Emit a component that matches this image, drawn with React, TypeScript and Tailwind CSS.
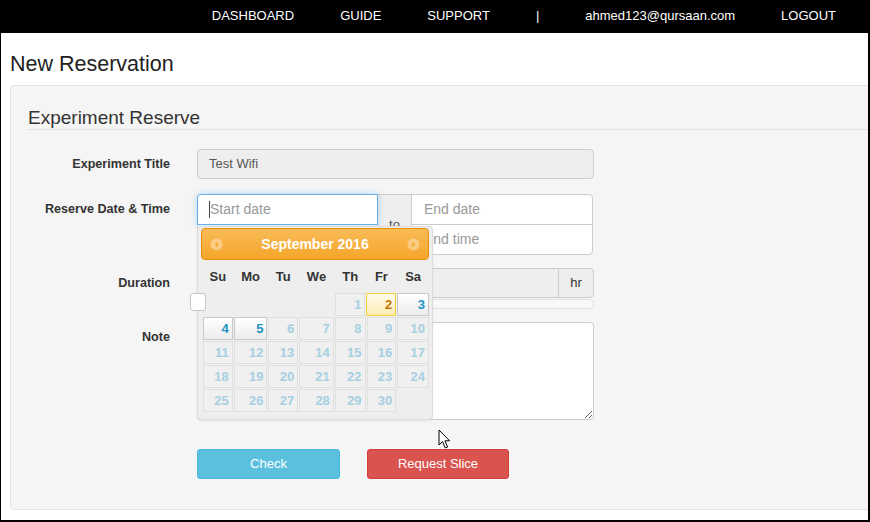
import React from 'react';

type Cell = { day?: number; state?: 'off' | 'on' | 'hover' };

const colWidths = ['w-[30px]', 'w-[34px]', 'w-[30px]', 'w-[35px]', 'w-[31px]', 'w-[30px]', 'w-[32px]'];
const dayNames = ['Su', 'Mo', 'Tu', 'We', 'Th', 'Fr', 'Sa'];

// September 2016, first week starts on Thursday
const weeks: Cell[][] = [
  [{}, {}, {}, {}, { day: 1, state: 'off' }, { day: 2, state: 'hover' }, { day: 3, state: 'on' }],
  [{ day: 4, state: 'on' }, { day: 5, state: 'on' }, 6, 7, 8, 9, 10].map((c) =>
    typeof c === 'number' ? { day: c, state: 'off' as const } : c
  ),
  [11, 12, 13, 14, 15, 16, 17].map((d) => ({ day: d, state: 'off' as const })),
  [18, 19, 20, 21, 22, 23, 24].map((d) => ({ day: d, state: 'off' as const })),
  [...[25, 26, 27, 28, 29, 30].map((d) => ({ day: d, state: 'off' as const })), {}],
];

function DayCell({ cell, width }: { cell: Cell; width: string }) {
  if (!cell.day) return <div className={`${width} h-[23px]`} />;
  const tone =
    cell.state === 'hover'
      ? 'border-[#f7cf3a] bg-gradient-to-b from-[#fffcec] to-[#fcecb0] text-[#c77405]'
      : cell.state === 'on'
      ? 'border-[#c9c9c9] bg-gradient-to-b from-white to-[#ececec] text-[#1c94c4]'
      : 'border-[#e0e0e0] bg-[#f0f0f0] text-[#a6cfe1]';
  return (
    <div className={`${width} h-[23px] border ${tone} flex items-center justify-end pr-[3px] text-[13px] font-bold`}>
      {cell.day}
    </div>
  );
}

function ArrowIcon({ dir }: { dir: 'prev' | 'next' }) {
  return (
    <svg width="13" height="13" viewBox="0 0 13 13">
      <circle cx="6.5" cy="6.5" r="6" fill="#fff" fillOpacity="0.35" />
      {dir === 'prev' ? (
        <path d="M7.8 3.8 L4.8 6.5 L7.8 9.2 Z" fill="#f6a828" />
      ) : (
        <path d="M5.2 3.8 L8.2 6.5 L5.2 9.2 Z" fill="#f6a828" />
      )}
    </svg>
  );
}

function Calendar() {
  return (
    <div className="absolute left-0 top-[32px] z-10 w-[236px] h-[194px] border border-[#dcdcdc] rounded-[4px] bg-[#eeeeee] px-[3px] pt-[1px] shadow-[0_1px_2px_rgba(0,0,0,0.08)]">
      <div className="w-[228px] h-[32px] border border-[#e78f08] rounded-[4px] bg-gradient-to-b from-[#f9bb55] to-[#f5a628] flex items-center justify-between px-[8px] text-white text-[14px] font-bold">
        <ArrowIcon dir="prev" />
        <span>September 2016</span>
        <ArrowIcon dir="next" />
      </div>
      <div className="ml-[2px] flex gap-[1px] h-[33px] items-center">
        {dayNames.map((d, i) => (
          <div key={d} className={`${colWidths[i]} text-center text-[13px] font-bold text-[#333]`}>
            {d}
          </div>
        ))}
      </div>
      <div className="ml-[2px] flex flex-col gap-[1px]">
        {weeks.map((w, wi) => (
          <div key={wi} className="flex gap-[1px]">
            {w.map((c, ci) => (
              <DayCell key={ci} cell={c} width={colWidths[ci]} />
            ))}
          </div>
        ))}
      </div>
    </div>
  );
}

function Label({ children }: { children: React.ReactNode }) {
  return (
    <div className="w-[142px] shrink-0 text-right font-bold text-[12.6px] leading-[30px] text-[#333]">{children}</div>
  );
}

export default function App() {
  return (
    <div className="relative w-[870px] h-[522px] overflow-hidden bg-white border-l border-r-2 border-b-2 border-black font-['Liberation_Sans',Arial,sans-serif]">
      <nav className="h-[33px] bg-black flex items-center justify-end gap-[46px] pr-[32px] pb-[2px] text-white text-[13px]">
        <span>DASHBOARD</span>
        <span>GUIDE</span>
        <span>SUPPORT</span>
        <span>|</span>
        <span>ahmed123@qursaan.com</span>
        <span>LOGOUT</span>
      </nav>

      <div className="pl-[9px]">
        <h1 className="mt-[20px] text-[21.5px] leading-[22px] text-[#222]">New Reservation</h1>

        <div className="mt-[10px] -mr-[30px] h-[425px] border border-[#e3e3e3] rounded-[4px] bg-[#f5f5f5] pl-[17px] pt-[21px]">
          <div className="text-[19px] leading-[21px] text-[#333] pb-[1px] border-b border-[#e3e3e3]">
            Experiment Reserve
          </div>

          {/* Experiment Title */}
          <div className="mt-[19px] flex">
            <Label>Experiment Title</Label>
            <div className="ml-[27px] w-[397px] h-[30px] border border-[#ccc] rounded-[4px] bg-[#eee] pl-[11px] flex items-center text-[13px] text-[#555]">
              Test Wifi
            </div>
          </div>

          {/* Reserve Date & Time */}
          <div className="mt-[15px] flex">
            <Label>Reserve Date &amp; Time</Label>
            <div className="relative ml-[27px] flex">
              <div className="w-[181px] flex flex-col">
                <div className="relative z-[1] h-[31px] border border-[#66afe9] rounded-tl-[4px] bg-white pl-[11px] flex items-center text-[14px] text-[#999] shadow-[0_0_6px_rgba(102,175,233,0.45)]">
                  <span className="w-px h-[17px] bg-[#444]" />
                  <span>Start date</span>
                </div>
                {/* start time field, hidden under the open calendar */}
                <div className="-mt-px h-[31px] border border-[#ccc] rounded-bl-[4px] bg-white" />
              </div>
              <div className="-ml-px w-[35px] h-[61px] border border-[#ccc] bg-[#eee] flex items-center justify-center text-[13px] text-[#555]">
                to
              </div>
              <div className="-ml-px w-[182px] flex flex-col">
                <div className="h-[31px] border border-[#ccc] rounded-tr-[4px] bg-white pl-[12px] flex items-center text-[14px] text-[#999]">
                  End date
                </div>
                <div className="-mt-px h-[31px] border border-[#ccc] rounded-br-[4px] bg-white pl-[12px] flex items-center text-[14px] text-[#999]">
                  End time
                </div>
              </div>
              <Calendar />
            </div>
          </div>

          {/* Duration */}
          <div className="mt-[13px] flex">
            <Label>Duration</Label>
            <div className="relative ml-[27px] w-[397px]">
              <div className="flex">
                <div className="w-[362px] h-[30px] border border-[#ccc] rounded-l-[4px] bg-[#eee]" />
                <div className="-ml-px w-[36px] h-[30px] border border-[#ccc] rounded-r-[4px] bg-[#eee] flex items-center justify-center text-[13px] text-[#333]">
                  hr
                </div>
              </div>
              <div className="mt-px h-[10px] border border-[#e2e2e2] rounded-[4px] bg-[#f9f9f9]" />
              <div className="absolute left-[-7px] top-[25px] z-20 w-[16px] h-[18px] border border-[#c6c6c6] rounded-[3px] bg-white" />
            </div>
          </div>

          {/* Note */}
          <div className="mt-[13px] flex">
            <Label>Note</Label>
            <textarea className="ml-[27px] w-[397px] h-[98px] border border-[#ccc] rounded-[4px] bg-white outline-none" />
          </div>

          {/* Actions */}
          <div className="mt-[29px] ml-[169px] flex gap-[27px]">
            <button className="w-[143px] h-[30px] border border-[#46b8da] rounded-[3px] bg-[#5bc0de] text-white text-[13px]">
              Check
            </button>
            <button className="w-[142px] h-[30px] border border-[#d43f3a] rounded-[3px] bg-[#d9534f] text-white text-[13px]">
              Request Slice
            </button>
          </div>
        </div>
      </div>

      {/* mouse pointer */}
      <svg className="absolute left-[437px] top-[429px]" width="14" height="21" viewBox="0 0 14 21">
        <path d="M1 1 L1 16 L4.5 12.6 L7.3 19 L9.6 18 L6.9 11.8 L11.6 11.8 Z" fill="#fff" stroke="#000" strokeWidth="1" strokeLinejoin="round" />
      </svg>
    </div>
  );
}
